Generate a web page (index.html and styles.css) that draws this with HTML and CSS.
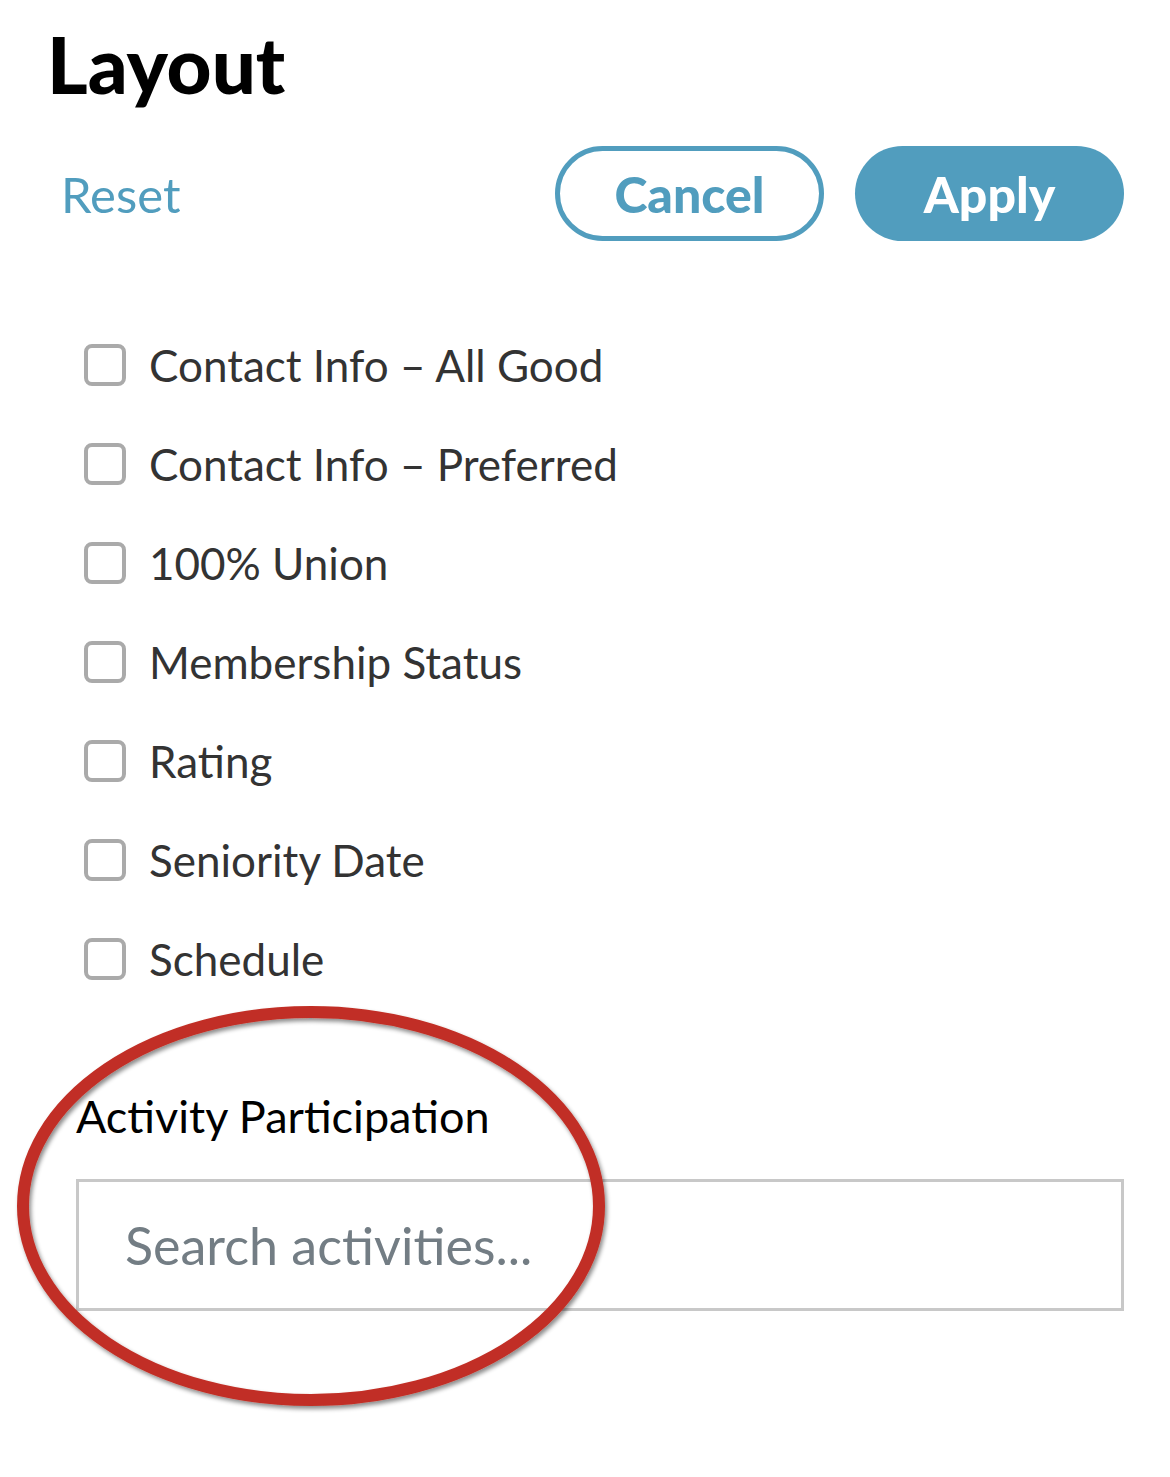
FILE: index.html
```html
<!DOCTYPE html>
<html lang="en">
<head>
    <meta charset="UTF-8">
    <meta name="viewport" content="width=device-width, initial-scale=1.0">
    <title>Layout</title>
    <link rel="stylesheet" href="styles.css">
</head>
<body>
    <div class="panel">
        <h1>Layout</h1>

        <div class="actions">
            <button class="link-btn" type="button">Reset</button>
            <div class="btn-group">
                <button class="btn btn-outline" type="button">Cancel</button>
                <button class="btn btn-fill" type="button">Apply</button>
            </div>
        </div>

        <ul class="options">
            <li><label><span class="box"></span>Contact Info – All Good</label></li>
            <li><label><span class="box"></span>Contact Info – Preferred</label></li>
            <li><label><span class="box"></span>100% Union</label></li>
            <li><label><span class="box"></span>Membership Status</label></li>
            <li><label><span class="box"></span>Rating</label></li>
            <li><label><span class="box"></span>Seniority Date</label></li>
            <li><label><span class="box"></span>Schedule</label></li>
        </ul>

        <div class="activity">
            <label class="field-label" for="activitySearch">Activity Participation</label>
            <input type="text" id="activitySearch" placeholder="Search activities...">

            <!-- hand drawn highlight -->
            <svg class="circle" width="620" height="420" viewBox="0 0 620 420">
                <defs>
                    <filter id="shade" x="-10%" y="-10%" width="120%" height="120%">
                        <feDropShadow dx="2" dy="3" stdDeviation="2" flood-color="#000" flood-opacity="0.45"/>
                    </filter>
                </defs>
                <ellipse cx="302" cy="200" rx="288" ry="194" fill="none" stroke="#c12f25" stroke-width="12" filter="url(#shade)"/>
            </svg>
        </div>
    </div>
</body>
</html>
```

FILE: styles.css
```css
body {
    font-family: Lato, "Open Sans", sans-serif;
    background-color: #fff;
    margin: 0;
    padding: 0;
}

.panel {
    padding: 22px 46px 0 47px;
}

h1 {
    margin: 0;
    font-size: 78px;
    font-weight: 900;
    color: #000;
    line-height: 84px;
}

.actions {
    display: flex;
    justify-content: space-between;
    align-items: center;
    margin-top: 40px;
}

.link-btn {
    background: none;
    border: none;
    padding: 0 0 0 14px;
    font-family: inherit;
    font-size: 49px;
    color: #519dbe;
    cursor: pointer;
}

.btn-group {
    display: flex;
    gap: 31px;
}

.btn {
    width: 269px;
    height: 95px;
    border-radius: 48px;
    font-family: inherit;
    font-size: 50px;
    font-weight: 900;
    cursor: pointer;
}

.btn-outline {
    background: #fff;
    color: #519dbe;
    border: 5px solid #519dbe;
}

.btn-fill {
    background: #519dbe;
    color: #fff;
    border: none;
}

.options {
    list-style: none;
    margin: 74px 0 0 0;
    padding: 0 0 0 37px;
}

.options li {
    height: 99px;
    display: flex;
    align-items: center;
}

.options label {
    display: flex;
    align-items: center;
    font-size: 44px;
    color: #333;
}

.box {
    width: 34px;
    height: 34px;
    border: 4px solid #aaa;
    border-radius: 8px;
    margin-right: 23px;
}

.activity {
    position: relative;
    margin-top: 80px;
    padding: 0 0 150px 29px;
}

.field-label {
    display: block;
    font-size: 45px;
    color: #000;
    line-height: 56px;
}

input {
    display: block;
    box-sizing: border-box;
    width: 100%;
    height: 132px;
    margin-top: 35px;
    padding: 0 0 0 46px;
    border: 3px solid #c8c8c8;
    border-radius: 0;
    font-family: inherit;
    font-size: 52px;
    color: #333;
}

input::placeholder {
    color: #737d84;
}

.circle {
    position: absolute;
    left: -38px;
    top: -82px;
    pointer-events: none;
}
```
